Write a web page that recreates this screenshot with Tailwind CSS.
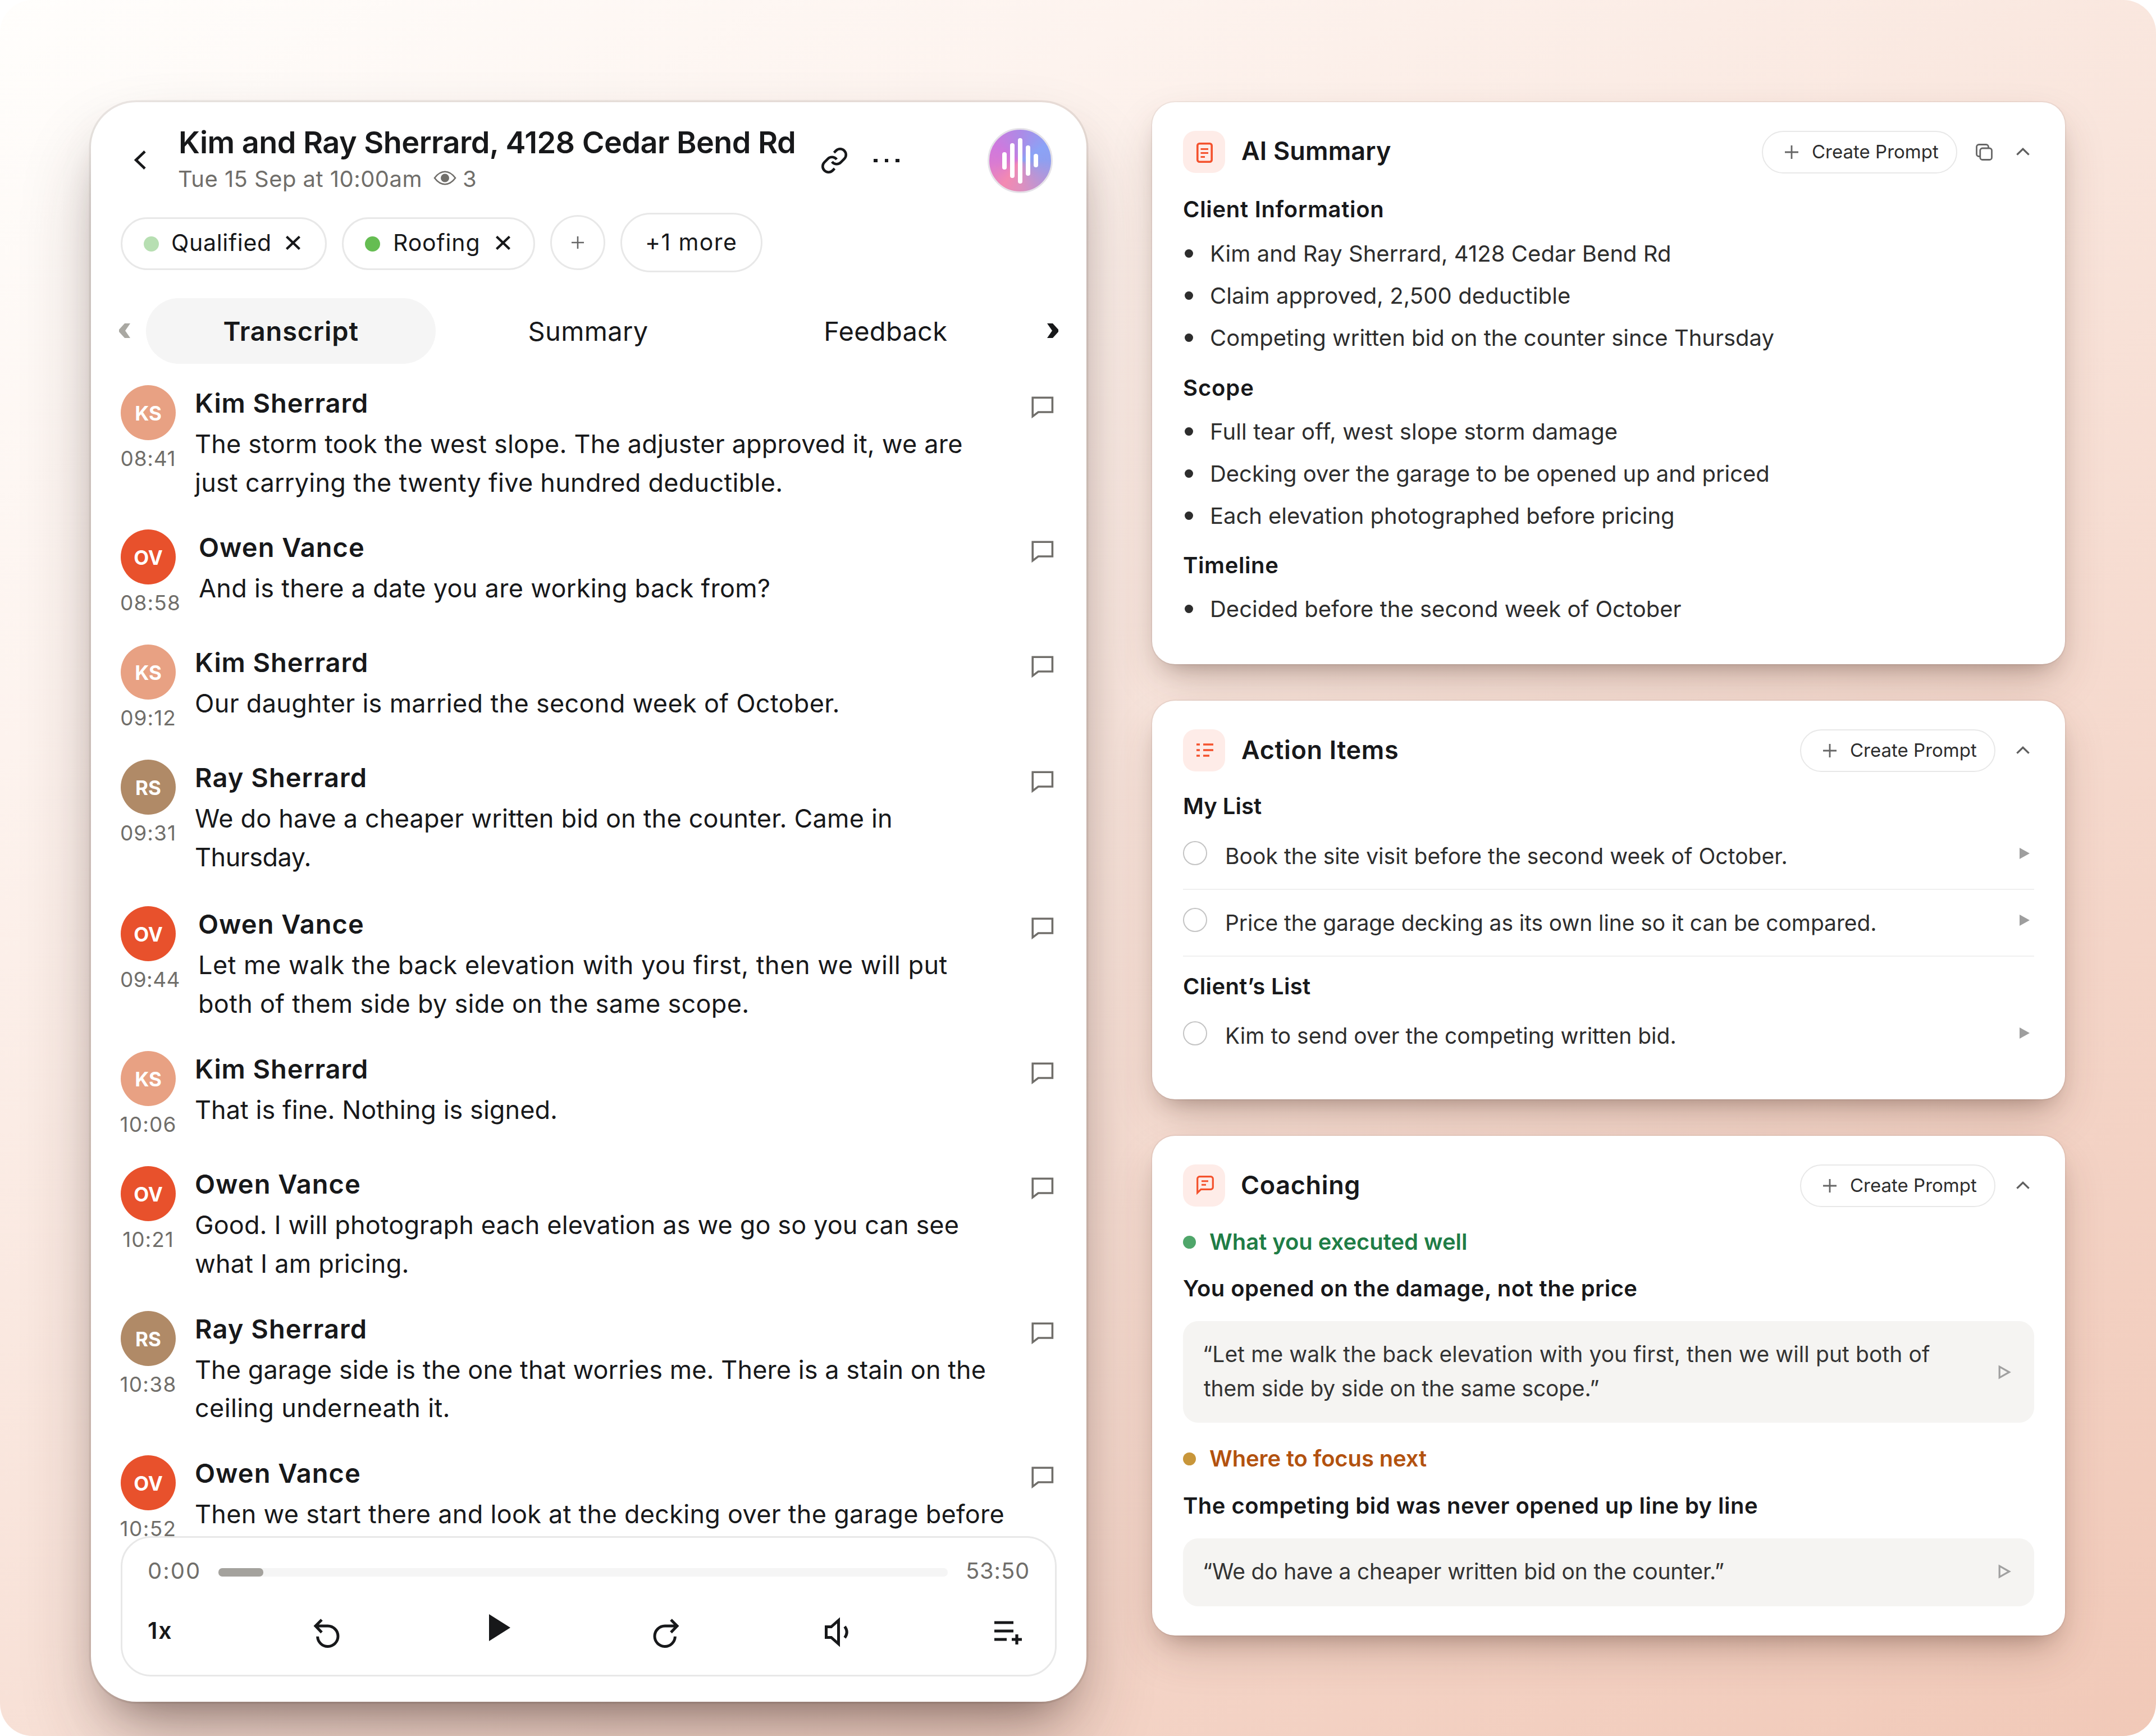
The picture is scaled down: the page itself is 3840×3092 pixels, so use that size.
<!DOCTYPE html>
<html lang="en">
<head>
<meta charset="utf-8">
<title>Kim and Ray Sherrard, 4128 Cedar Bend Rd</title>
<script src="https://cdn.jsdelivr.net/npm/@tailwindcss/browser@4"></script>
</head>
<body class="bg-white">
<svg class="hidden">
  <symbol id="comment" viewBox="0 0 40 40"><path d="M2.2 2.2H37.4V28H12.2L2.2 35.6Z" fill="none" stroke="#706e6a" stroke-width="3.6"/></symbol>
  <symbol id="x" viewBox="0 0 28 26"><path d="M2 1.5 26 24.5M26 1.5 2 24.5" fill="none" stroke="#17181a" stroke-width="4.4"/></symbol>
  <symbol id="plus" viewBox="0 0 24 24"><path d="M12 0V24M0 12H24" fill="none" stroke="#666" stroke-width="2.8"/></symbol>
  <symbol id="up" viewBox="0 0 24 15"><path d="M1.4 12.6 12 2.4 22.6 12.6" fill="none" stroke="#5f5f5f" stroke-width="3.4"/></symbol>
  <symbol id="play" viewBox="0 0 18 20"><path d="M0 0 18 10 0 20Z" fill="#9e9e9e"/></symbol>
  <symbol id="play-outline" viewBox="0 0 23 26"><path d="M2.2 3.2 19.6 13 2.2 22.8Z" fill="none" stroke="#a0a0a0" stroke-width="3.2"/></symbol>
</svg>

<main class="flex w-[3840px] h-[3092px] overflow-hidden rounded-[58px] pl-[162px] pt-[182px] gap-[117px] items-start font-[Inter,'Liberation_Sans',sans-serif] text-[#17181a] bg-[linear-gradient(147deg,#fffefc_0%,#fdf3ee_24%,#f9e5dc_48%,#f4d5c8_74%,#f1c9b8_100%)]">

  <!-- Call recording -->
  <section class="w-[1773px] h-[2849px] shrink-0 rounded-[81px] bg-white px-[53px] shadow-[0_0_0_3.5px_rgba(60,40,30,0.09),0_74px_140px_-20px_rgba(60,35,30,0.32),0_44px_80px_-45px_rgba(50,30,25,0.5)]">
    <header class="mt-[44px] flex h-[120px] items-center">
      <svg class="ml-[23px] h-[34px] w-[22px] shrink-0 -mt-[3px]" viewBox="0 0 22 34"><path d="M20 1.8 4.2 17 20 32.2" fill="none" stroke="#17181a" stroke-width="4.8"/></svg>
      <div class="ml-[58px] w-[1143px] whitespace-nowrap">
        <h1 class="text-[54px] leading-[65px] font-semibold tracking-[-0.54px]">Kim and Ray Sherrard, 4128 Cedar Bend Rd</h1>
        <div class="flex h-[65px] items-center text-[40px] leading-[65px] text-[#706e6a]">
          <span class="ml-[-1px] tracking-[0.45px]">Tue 15 Sep at 10:00am</span>
          <svg class="ml-[20px] mb-[4px] h-[26px] w-[41px]" viewBox="0 0 41 26"><path d="M2 13C8 5 14 1.8 20.500 1.8S33 5 39 13C33 21 27 24.200 20.500 24.200S8 21 2 13Z" fill="none" stroke="#706e6a" stroke-width="2.6"/><circle cx="20.500" cy="13" r="7.500" fill="#706e6a"/></svg>
          <span class="ml-[11px]">3</span>
        </div>
      </div>
      <svg class="h-[50px] w-[50px] shrink-0" viewBox="0 0 24 24"><path d="M10 13a5 5 0 0 0 7.540.54l3-3a5 5 0 0 0-7.070-7.070l-1.720 1.710M14 11a5 5 0 0 0-7.540-.54l-3 3a5 5 0 0 0 7.070 7.070l1.710-1.710" fill="none" stroke="#17181a" stroke-width="2.200"/></svg>
      <div class="ml-[45px] flex gap-[13px]"><i class="size-[6.500px] bg-[#17181a]"></i><i class="size-[6.500px] bg-[#17181a]"></i><i class="size-[6.500px] bg-[#17181a]"></i></div>
      <div class="mr-[7px] ml-auto flex size-[116px] items-center justify-center gap-[6.200px] rounded-full border-[3.500px] border-[#e5e2e8] bg-[conic-gradient(from_0deg,#ad8ae6_0deg,#8ba3f6_60deg,#8f9ff0_90deg,#b596d8_130deg,#e08fbd_180deg,#f389b2_215deg,#d97bd2_265deg,#cf79dd_300deg,#ad8ae6_360deg)]">
        <i class="h-[31px] w-[8px] rounded-full bg-white"></i><i class="h-[62px] w-[8px] rounded-full bg-white"></i><i class="h-[81px] w-[8px] rounded-full bg-white"></i><i class="h-[54px] w-[8px] rounded-full bg-white"></i><i class="h-[24px] w-[8px] rounded-full bg-white"></i>
      </div>
    </header>

    <div class="mt-[33px] flex h-[106px] items-center gap-[27px] text-[41px]">
      <div class="mt-[4px] flex h-[94px] w-[367px] items-center rounded-full border-[3.500px] border-[#e8e8e8] pb-[3px] pl-[38px]"><i class="mt-[3px] size-[27px] rounded-full bg-[#b7dfb2]"></i><span class="ml-[22px] w-[203px] tracking-[0.69px]">Qualified</span><svg class="h-[25px] w-[28px]"><use href="#x"/></svg></div>
      <div class="mt-[4px] flex h-[94px] w-[344px] items-center rounded-full border-[3.500px] border-[#e8e8e8] pb-[3px] pl-[38px]"><i class="mt-[3px] size-[27px] rounded-full bg-[#65bd52]"></i><span class="ml-[23px] w-[182px] tracking-[0.85px]">Roofing</span><svg class="h-[25px] w-[28px]"><use href="#x"/></svg></div>
      <div class="flex size-[98px] items-center justify-center rounded-full border-[3.500px] border-[#e8e8e8]"><svg class="size-[22px]"><use href="#plus"/></svg></div>
      <div class="flex h-[106px] w-[253px] items-center rounded-full border-[3.500px] border-[#e8e8e8] pl-[41px] tracking-[1.400px]">+1 more</div>
    </div>

    <nav class="mt-[46px] -mr-[3px] -ml-[3px] flex h-[117px] items-center gap-[28px] text-[47px]">
      <svg class="mb-[1px] h-[26px] w-[20px]" viewBox="0 0 20 26"><path d="M10 0H20L11 13 20 26H10L0 15V11Z" fill="#a9a8a2"/></svg>
      <div class="grid flex-1 grid-cols-3 gap-[14px] text-center leading-[117px]">
        <span class="rounded-full bg-[#f5f5f5] font-semibold tracking-[0.860px]">Transcript</span>
        <span class="-ml-[2px] tracking-[0.320px]">Summary</span>
        <span class="-ml-[3px] tracking-[0.290px]">Feedback</span>
      </div>
      <svg class="mb-[1px] h-[26px] w-[20px]" viewBox="0 0 20 26"><path d="M10 0H0L9 13 0 26H10L20 15V11Z" fill="#17181a"/></svg>
    </nav>

    <div class="mt-[38px] -ml-[20px] h-[2050px] overflow-hidden pl-[20px] text-[45px] leading-[68.500px] whitespace-nowrap">
      <article class="flex h-[257px]">
        <div class="w-[98px] shrink-0"><div class="size-[98px] rounded-full bg-[#e8a183] text-center text-[35px] leading-[101px] font-bold text-white">KS</div><div class="mt-[11px] -mr-[10px] -ml-[10px] text-center text-[37px] leading-[44px] tracking-[0.730px] text-[#706e6a]">08:41</div></div>
        <div class="ml-[34px] flex-1 pt-[2px]"><h2 class="text-[47px] leading-[60px] font-semibold tracking-[0.900px]">Kim Sherrard</h2><p class="mt-[9px] tracking-[0.190px]">The storm took the west slope. The adjuster approved it, we are</p><p class="tracking-[0.270px]">just carrying the twenty five hundred deductible.</p></div>
        <svg class="mt-[20px] mr-[5px] size-[40px]"><use href="#comment"/></svg>
      </article>
      <article class="flex h-[205px]">
        <div class="w-[105px] shrink-0"><div class="size-[98px] rounded-full bg-[#e8512c] text-center text-[35px] leading-[101px] font-bold text-white">OV</div><div class="mt-[11px] -ml-[1px] text-[37px] leading-[44px] tracking-[1.150px] text-[#706e6a]">08:58</div></div>
        <div class="ml-[34px] flex-1 pt-[2px]"><h2 class="text-[47px] leading-[60px] font-semibold tracking-[1px]">Owen Vance</h2><p class="mt-[9px] tracking-[0.300px]">And is there a date you are working back from?</p></div>
        <svg class="mt-[20px] mr-[5px] size-[40px]"><use href="#comment"/></svg>
      </article>
      <article class="flex h-[205px]">
        <div class="w-[98px] shrink-0"><div class="size-[98px] rounded-full bg-[#e8a183] text-center text-[35px] leading-[101px] font-bold text-white">KS</div><div class="mt-[11px] -mr-[10px] -ml-[10px] text-center text-[37px] leading-[44px] tracking-[1px] text-[#706e6a]">09:12</div></div>
        <div class="ml-[34px] flex-1 pt-[2px]"><h2 class="text-[47px] leading-[60px] font-semibold tracking-[0.900px]">Kim Sherrard</h2><p class="mt-[9px] tracking-[0.310px]">Our daughter is married the second week of October.</p></div>
        <svg class="mt-[20px] mr-[5px] size-[40px]"><use href="#comment"/></svg>
      </article>
      <article class="flex h-[261px]">
        <div class="w-[98px] shrink-0"><div class="size-[98px] rounded-full bg-[#b08a67] text-center text-[35px] leading-[101px] font-bold text-white">RS</div><div class="mt-[11px] -mr-[10px] -ml-[10px] text-center text-[37px] leading-[44px] tracking-[1.050px] text-[#706e6a]">09:31</div></div>
        <div class="ml-[34px] flex-1 pt-[2px]"><h2 class="text-[47px] leading-[60px] font-semibold tracking-[1.050px]">Ray Sherrard</h2><p class="mt-[9px] tracking-[0.190px]">We do have a cheaper written bid on the counter. Came in</p><p class="tracking-[-0.490px]">Thursday.</p></div>
        <svg class="mt-[20px] mr-[5px] size-[40px]"><use href="#comment"/></svg>
      </article>
      <article class="flex h-[258px]">
        <div class="w-[105px] shrink-0"><div class="size-[98px] rounded-full bg-[#e8512c] text-center text-[35px] leading-[101px] font-bold text-white">OV</div><div class="mt-[11px] -ml-[1px] text-[37px] leading-[44px] tracking-[0.410px] text-[#706e6a]">09:44</div></div>
        <div class="ml-[33px] flex-1 pt-[2px]"><h2 class="text-[47px] leading-[60px] font-semibold tracking-[1px]">Owen Vance</h2><p class="mt-[9px] tracking-[0.510px]">Let me walk the back elevation with you first, then we will put</p><p class="tracking-[0.300px]">both of them side by side on the same scope.</p></div>
        <svg class="mt-[20px] mr-[5px] size-[40px]"><use href="#comment"/></svg>
      </article>
      <article class="flex h-[205px]">
        <div class="w-[98px] shrink-0"><div class="size-[98px] rounded-full bg-[#e8a183] text-center text-[35px] leading-[101px] font-bold text-white">KS</div><div class="mt-[11px] -mr-[10px] -ml-[10px] text-center text-[37px] leading-[44px] tracking-[1.150px] text-[#706e6a]">10:06</div></div>
        <div class="ml-[34px] flex-1 pt-[2px]"><h2 class="text-[47px] leading-[60px] font-semibold tracking-[0.900px]">Kim Sherrard</h2><p class="mt-[9px] tracking-[0.050px]">That is fine. Nothing is signed.</p></div>
        <svg class="mt-[20px] mr-[5px] size-[40px]"><use href="#comment"/></svg>
      </article>
      <article class="flex h-[257.500px]">
        <div class="w-[98px] shrink-0"><div class="size-[98px] rounded-full bg-[#e8512c] text-center text-[35px] leading-[101px] font-bold text-white">OV</div><div class="mt-[11px] -mr-[10px] -ml-[10px] text-center text-[37px] leading-[44px] tracking-[0.970px] text-[#706e6a]">10:21</div></div>
        <div class="ml-[34px] flex-1 pt-[2px]"><h2 class="text-[47px] leading-[60px] font-semibold tracking-[1px]">Owen Vance</h2><p class="mt-[9px] tracking-[0.130px]">Good. I will photograph each elevation as we go so you can see</p><p class="tracking-[0.200px]">what I am pricing.</p></div>
        <svg class="mt-[20px] mr-[5px] size-[40px]"><use href="#comment"/></svg>
      </article>
      <article class="flex h-[257.500px]">
        <div class="w-[98px] shrink-0"><div class="size-[98px] rounded-full bg-[#b08a67] text-center text-[35px] leading-[101px] font-bold text-white">RS</div><div class="mt-[11px] -mr-[10px] -ml-[10px] text-center text-[37px] leading-[44px] tracking-[1.270px] text-[#706e6a]">10:38</div></div>
        <div class="ml-[34px] flex-1 pt-[2px]"><h2 class="text-[47px] leading-[60px] font-semibold tracking-[1.050px]">Ray Sherrard</h2><p class="mt-[9px] tracking-[0.070px]">The garage side is the one that worries me. There is a stain on the</p><p class="tracking-[0.350px]">ceiling underneath it.</p></div>
        <svg class="mt-[20px] mr-[5px] size-[40px]"><use href="#comment"/></svg>
      </article>
      <article class="flex h-[205px]">
        <div class="w-[98px] shrink-0"><div class="size-[98px] rounded-full bg-[#e8512c] text-center text-[35px] leading-[101px] font-bold text-white">OV</div><div class="mt-[11px] -mr-[10px] -ml-[10px] text-center text-[37px] leading-[44px] tracking-[1.360px] text-[#706e6a]">10:52</div></div>
        <div class="ml-[34px] flex-1 pt-[2px]"><h2 class="text-[47px] leading-[60px] font-semibold tracking-[1px]">Owen Vance</h2><p class="mt-[9px] tracking-[0.280px]">Then we start there and look at the decking over the garage before</p></div>
        <svg class="mt-[20px] mr-[5px] size-[40px]"><use href="#comment"/></svg>
      </article>
    </div>

    <!-- Player -->
    <div class="h-[250px] rounded-[54px] border-[3.500px] border-[#e8e8e8] pl-[45px]">
      <div class="mt-[29px] flex h-[60px] items-center text-[40px] leading-[60px] text-[#706e6a]">
        <span class="w-[126px] tracking-[2px]">0:00</span>
        <div class="mt-[4px] h-[15px] w-[1299px] rounded-[7px] bg-[#f5f5f5]"><div class="h-[15px] w-[80px] rounded-[7px] bg-[#a4a29d]"></div></div>
        <span class="ml-[32px] tracking-[0.780px]">53:50</span>
      </div>
      <div class="mt-[53px] flex h-[56px] items-center">
        <span class="-mt-[10px] w-[294px] text-[41px] leading-[46px] font-semibold tracking-[2px]">1x</span>
        <svg class="h-[56px] w-[50px]" viewBox="0 0 50 56"><path d="M8.600 33.800A18.200 18.200 0 1 0 26.800 15.100H5M16 4 5 15.100 16 26.500" fill="none" stroke="#17181a" stroke-width="5"/></svg>
        <svg class="mb-[20px] ml-[264px] h-[48px] w-[38px]" viewBox="0 0 38 48"><path d="M0 0 38 24 0 48Z" fill="#17181a"/></svg>
        <svg class="ml-[252px] h-[56px] w-[50px]" viewBox="0 0 50 56"><path d="M41.400 33.800A18.200 18.200 0 1 1 23.200 15.100H45M34 4 45 15.100 34 26.500" fill="none" stroke="#17181a" stroke-width="5"/></svg>
        <svg class="mb-[5px] ml-[258px] h-[54px] w-[46px]" viewBox="0 0 46 54"><path d="M2.500 17.500H11.500L24.500 6V48L11.500 36.500H2.500Z" fill="none" stroke="#17181a" stroke-width="5"/><path d="M35.500 17Q43 27 35.500 37" fill="none" stroke="#17181a" stroke-width="5"/></svg>
        <svg class="ml-[256px] h-[44px] w-[50px]" viewBox="0 0 50 44"><path d="M0 3H34M0 18H34M0 33H22M31 33H49M40 24V42" fill="none" stroke="#17181a" stroke-width="5.200"/></svg>
      </div>
    </div>
  </section>

  <!-- Insights -->
  <div class="flex w-[1626px] flex-col gap-[65px] text-[40px]">
    <section class="h-[1001px] rounded-[41px] bg-white px-[55px] pt-[51px] shadow-[0_0_0_2px_rgba(60,40,30,0.06),0_36px_80px_-10px_rgba(80,45,30,0.22),0_22px_44px_-24px_rgba(60,35,25,0.4)]">
      <header class="flex h-[75px] items-center">
        <div class="flex size-[75px] items-center justify-center rounded-[22px] bg-[#feece8]"><svg class="ml-[2px] mt-[2px] h-[36px] w-[29px]" viewBox="0 0 29 36"><rect x="1.800" y="1.800" width="25.400" height="32.400" rx="3.500" fill="none" stroke="#f4522d" stroke-width="3.600"/><path d="M7.500 11.500H21M7.500 18.500H21M7.500 25.500H15" stroke="#f4522d" stroke-width="3.200"/></svg></div>
        <h2 class="mb-[4px] ml-[29px] text-[45px] font-semibold tracking-[0.130px]">AI Summary</h2>
        <div class="ml-auto flex h-[76px] w-[348px] items-center rounded-full border-[2.500px] border-[#e8e8e8] pl-[39px] text-[33px] text-[#2d2d2d]"><svg class="size-[24px]"><use href="#plus"/></svg><span class="ml-[24px]">Create Prompt</span></div>
        <svg class="ml-[33px] h-[30px] w-[30px]" viewBox="0 0 30 30"><path d="M7.500 22.500H5.500A4 4 0 0 1 1.500 18.500V5.500A4 4 0 0 1 5.500 1.500H18.500A4 4 0 0 1 22.500 5.500V7.500" fill="none" stroke="#666" stroke-width="2.800"/><rect x="7.800" y="8" width="20.700" height="20.500" rx="4" fill="none" stroke="#666" stroke-width="2.800"/></svg>
        <svg class="mr-[8px] ml-[42px] h-[15px] w-[24px]"><use href="#up"/></svg>
      </header>
      <h3 class="mt-[35px] leading-[60px] font-semibold tracking-[0.700px]">Client Information</h3>
      <ul class="mt-[11px] leading-[75px] text-[#2d2d2d]">
        <li class="flex items-center"><i class="mr-[30px] ml-[3px] size-[15px] rounded-full bg-[#2d2d2d]"></i><span class="tracking-[0.040px]">Kim and Ray Sherrard, 4128 Cedar Bend Rd</span></li>
        <li class="flex items-center"><i class="mr-[30px] ml-[3px] size-[15px] rounded-full bg-[#2d2d2d]"></i><span class="tracking-[0.100px]">Claim approved, 2,500 deductible</span></li>
        <li class="flex items-center"><i class="mr-[30px] ml-[3px] size-[15px] rounded-full bg-[#2d2d2d]"></i><span class="tracking-[-0.020px]">Competing written bid on the counter since Thursday</span></li>
      </ul>
      <h3 class="mt-[22px] leading-[60px] font-semibold tracking-[0.900px]">Scope</h3>
      <ul class="mt-[10px] leading-[75px] text-[#2d2d2d]">
        <li class="flex items-center"><i class="mr-[30px] ml-[3px] size-[15px] rounded-full bg-[#2d2d2d]"></i><span class="tracking-[0.140px]">Full tear off, west slope storm damage</span></li>
        <li class="flex items-center"><i class="mr-[30px] ml-[3px] size-[15px] rounded-full bg-[#2d2d2d]"></i><span class="tracking-[-0.040px]">Decking over the garage to be opened up and priced</span></li>
        <li class="flex items-center"><i class="mr-[30px] ml-[3px] size-[15px] rounded-full bg-[#2d2d2d]"></i><span class="tracking-[-0.040px]">Each elevation photographed before pricing</span></li>
      </ul>
      <h3 class="mt-[21px] leading-[60px] font-semibold tracking-[0.600px]">Timeline</h3>
      <ul class="mt-[10px] leading-[75px] text-[#2d2d2d]">
        <li class="flex items-center"><i class="mr-[30px] ml-[3px] size-[15px] rounded-full bg-[#2d2d2d]"></i><span>Decided before the second week of October</span></li>
      </ul>
    </section>

    <section class="h-[710px] rounded-[41px] bg-white px-[55px] pt-[51px] shadow-[0_0_0_2px_rgba(60,40,30,0.06),0_36px_80px_-10px_rgba(80,45,30,0.22),0_22px_44px_-24px_rgba(60,35,25,0.4)]">
      <header class="flex h-[75px] items-center">
        <div class="flex size-[75px] items-center justify-center rounded-[22px] bg-[#feece8]"><svg class="ml-[3px] mb-[2px] h-[26px] w-[30px]" viewBox="0 0 30 26"><path d="M0 3H6M12 3H30M0 13H6M12 13H30M0 23H6M12 23H23" stroke="#f4522d" stroke-width="3.400"/></svg></div>
        <h2 class="mb-[2px] ml-[29px] text-[45px] font-semibold tracking-[0.640px]">Action Items</h2>
        <div class="ml-auto flex h-[76px] w-[348px] items-center rounded-full border-[2.500px] border-[#e8e8e8] pl-[39px] text-[33px] text-[#2d2d2d]"><svg class="size-[24px]"><use href="#plus"/></svg><span class="ml-[24px]">Create Prompt</span></div>
        <svg class="mr-[8px] ml-[37px] h-[15px] w-[24px]"><use href="#up"/></svg>
      </header>
      <h3 class="mt-[32px] leading-[60px] font-semibold">My List</h3>
      <div class="flex h-[119px] items-start border-b-[2.500px] border-[#f0f0f0] text-[39px] text-[#2d2d2d]"><i class="mt-[32px] size-[43px] rounded-full border-[2.500px] border-[#c4c4c4]"></i><span class="mt-[29px] ml-[32px] leading-[60px] tracking-[0.060px]">Book the site visit before the second week of October.</span><svg class="mt-[44px] mr-[8px] ml-auto h-[20px] w-[18px]"><use href="#play"/></svg></div>
      <div class="flex h-[119px] items-start border-b-[2.500px] border-[#f0f0f0] text-[39px] text-[#2d2d2d]"><i class="mt-[32px] size-[43px] rounded-full border-[2.500px] border-[#c4c4c4]"></i><span class="mt-[29px] ml-[32px] leading-[60px] tracking-[-0.090px]">Price the garage decking as its own line so it can be compared.</span><svg class="mt-[44px] mr-[8px] ml-auto h-[20px] w-[18px]"><use href="#play"/></svg></div>
      <h3 class="mt-[23px] leading-[60px] font-semibold tracking-[0.340px]">Client’s List</h3>
      <div class="flex items-start text-[39px] text-[#2d2d2d]"><i class="mt-[32px] size-[43px] rounded-full border-[2.500px] border-[#c4c4c4]"></i><span class="mt-[28px] ml-[32px] leading-[60px]">Kim to send over the competing written bid.</span><svg class="mt-[43px] mr-[8px] ml-auto h-[20px] w-[18px]"><use href="#play"/></svg></div>
    </section>

    <section class="h-[890px] rounded-[41px] bg-white px-[55px] pt-[51px] shadow-[0_0_0_2px_rgba(60,40,30,0.06),0_36px_80px_-10px_rgba(80,45,30,0.22),0_22px_44px_-24px_rgba(60,35,25,0.4)]">
      <header class="flex h-[75px] items-center">
        <div class="flex size-[75px] items-center justify-center rounded-[22px] bg-[#feece8]"><svg class="ml-[4px] h-[35px] w-[31px]" viewBox="0 0 31 35"><path d="M1.700 30.500V5.500A3.800 3.800 0 0 1 5.500 1.700H25.500A3.800 3.800 0 0 1 29.300 5.500V20.500A3.800 3.800 0 0 1 25.500 24.300H8Z" fill="none" stroke="#f4522d" stroke-width="3.200"/><path d="M9 9.700H21M9 16.200H17" stroke="#f4522d" stroke-width="3"/></svg></div>
        <h2 class="mb-[2px] ml-[28px] text-[45px] font-semibold tracking-[0.630px]">Coaching</h2>
        <div class="ml-auto flex h-[76px] w-[348px] items-center rounded-full border-[2.500px] border-[#e8e8e8] pl-[39px] text-[33px] text-[#2d2d2d]"><svg class="size-[24px]"><use href="#plus"/></svg><span class="ml-[24px]">Create Prompt</span></div>
        <svg class="mr-[8px] ml-[37px] h-[15px] w-[24px]"><use href="#up"/></svg>
      </header>
      <h3 class="mt-[33px] flex items-center leading-[60px] font-semibold tracking-[-0.040px] text-[#1f7d46]"><i class="mr-[24px] size-[23px] rounded-full bg-[#4fa66a]"></i>What you executed well</h3>
      <h4 class="mt-[23px] leading-[60px] font-semibold tracking-[0.430px]">You opened on the damage, not the price</h4>
      <div class="mt-[28px] flex h-[181px] items-center rounded-[27px] bg-[#f5f4f2] pl-[35px] text-[39px] leading-[61px] text-[#333]"><div class="mb-[3px] whitespace-nowrap"><p class="tracking-[0.090px]">“Let me walk the back elevation with you first, then we will put both of</p><p class="ml-[2px] tracking-[-0.190px]">them side by side on the same scope.”</p></div><svg class="mr-[41px] ml-auto h-[26px] w-[23px]"><use href="#play-outline"/></svg></div>
      <h3 class="mt-[34px] flex items-center leading-[60px] font-semibold tracking-[-0.130px] text-[#b3520f]"><i class="mr-[24px] size-[23px] rounded-full bg-[#c8963a]"></i>Where to focus next</h3>
      <h4 class="mt-[24px] leading-[60px] font-semibold tracking-[0.450px]">The competing bid was never opened up line by line</h4>
      <div class="mt-[28px] flex h-[121px] items-center rounded-[27px] bg-[#f5f4f2] pl-[35px] text-[39px] leading-[61px] text-[#333]"><p class="mb-[4px] tracking-[-0.190px]">“We do have a cheaper written bid on the counter.”</p><svg class="mr-[41px] mb-[4px] ml-auto h-[26px] w-[23px]"><use href="#play-outline"/></svg></div>
    </section>
  </div>
</main>
</body>
</html>
